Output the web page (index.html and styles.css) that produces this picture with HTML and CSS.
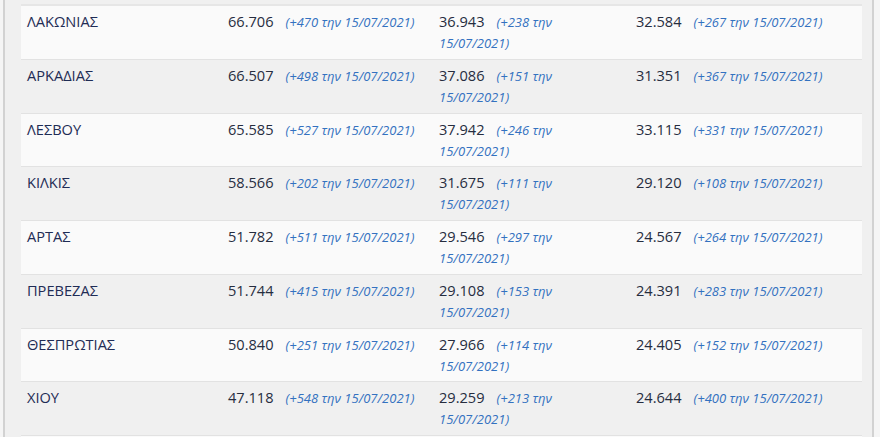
FILE: index.html
```html
<!DOCTYPE html>
<html lang="el">
<head>
<meta charset="utf-8">
<title>Εμβολιασμοί ανά περιφερειακή ενότητα</title>
<link rel="stylesheet" href="styles.css">
</head>
<body>
<div class="frame">
  <table class="stats">
    <colgroup>
      <col class="c-name">
      <col class="c-total">
      <col class="c-first">
      <col class="c-second">
    </colgroup>
    <tbody>
      <tr class="odd">
        <td class="name">ΛΑΚΩΝΙΑΣ</td>
        <td>66.706<span class="delta">(+470 την 15/07/2021)</span></td>
        <td class="narrow">36.943<span class="delta">(+238 την 15/07/2021)</span></td>
        <td>32.584<span class="delta">(+267 την 15/07/2021)</span></td>
      </tr>
      <tr class="even">
        <td class="name">ΑΡΚΑΔΙΑΣ</td>
        <td>66.507<span class="delta">(+498 την 15/07/2021)</span></td>
        <td class="narrow">37.086<span class="delta">(+151 την 15/07/2021)</span></td>
        <td>31.351<span class="delta">(+367 την 15/07/2021)</span></td>
      </tr>
      <tr class="odd">
        <td class="name">ΛΕΣΒΟΥ</td>
        <td>65.585<span class="delta">(+527 την 15/07/2021)</span></td>
        <td class="narrow">37.942<span class="delta">(+246 την 15/07/2021)</span></td>
        <td>33.115<span class="delta">(+331 την 15/07/2021)</span></td>
      </tr>
      <tr class="even">
        <td class="name">ΚΙΛΚΙΣ</td>
        <td>58.566<span class="delta">(+202 την 15/07/2021)</span></td>
        <td class="narrow">31.675<span class="delta">(+111 την 15/07/2021)</span></td>
        <td>29.120<span class="delta">(+108 την 15/07/2021)</span></td>
      </tr>
      <tr class="odd">
        <td class="name">ΑΡΤΑΣ</td>
        <td>51.782<span class="delta">(+511 την 15/07/2021)</span></td>
        <td class="narrow">29.546<span class="delta">(+297 την 15/07/2021)</span></td>
        <td>24.567<span class="delta">(+264 την 15/07/2021)</span></td>
      </tr>
      <tr class="even">
        <td class="name">ΠΡΕΒΕΖΑΣ</td>
        <td>51.744<span class="delta">(+415 την 15/07/2021)</span></td>
        <td class="narrow">29.108<span class="delta">(+153 την 15/07/2021)</span></td>
        <td>24.391<span class="delta">(+283 την 15/07/2021)</span></td>
      </tr>
      <tr class="odd">
        <td class="name">ΘΕΣΠΡΩΤΙΑΣ</td>
        <td>50.840<span class="delta">(+251 την 15/07/2021)</span></td>
        <td class="narrow">27.966<span class="delta">(+114 την 15/07/2021)</span></td>
        <td>24.405<span class="delta">(+152 την 15/07/2021)</span></td>
      </tr>
      <tr class="even">
        <td class="name">ΧΙΟΥ</td>
        <td>47.118<span class="delta">(+548 την 15/07/2021)</span></td>
        <td class="narrow">29.259<span class="delta">(+213 την 15/07/2021)</span></td>
        <td>24.644<span class="delta">(+400 την 15/07/2021)</span></td>
      </tr>
      <tr class="odd filler">
        <td></td><td></td><td></td><td></td>
      </tr>
    </tbody>
  </table>
</div>
</body>
</html>
```

FILE: styles.css
```css
html, body {
  margin: 0;
  padding: 0;
  background: #f5f5f5;
}

body {
  font-family: "Open Sans", "Noto Sans", sans-serif;
  overflow: hidden;
}

.frame {
  margin-left: 3px;
  width: 871px;
  border-left: 2px solid #d2d2d2;
  border-right: 2px solid #d2d2d2;
  background: #f0f0f0;
  padding: 4px 14px 0 16px;
  box-sizing: border-box;
  height: 437px;
}

.stats {
  width: 841px;
  table-layout: fixed;
  border-collapse: collapse;
  border-top: 2px solid #e6e6e6;
}

.c-name { width: 201px; }
.c-total { width: 211px; }
.c-first { width: 197px; }
.c-second { width: 232px; }

.stats td {
  padding: 5px 6px 5.75px;
  vertical-align: top;
  font-size: 14.6px;
  line-height: 21px;
  height: 42px;
  color: #262d3f;
  border-bottom: 1px solid #e2e2e2;
}

.stats td.name {
  color: #1f2c55;
}

.stats td.narrow {
  padding-right: 20px;
}

.odd td { background: #fafafa; }
.even td { background: #f0f0f0; }

.delta {
  margin-left: 12px;
  font-style: italic;
  font-size: 13px;
  line-height: 1;
  color: #3371c0;
}
```
